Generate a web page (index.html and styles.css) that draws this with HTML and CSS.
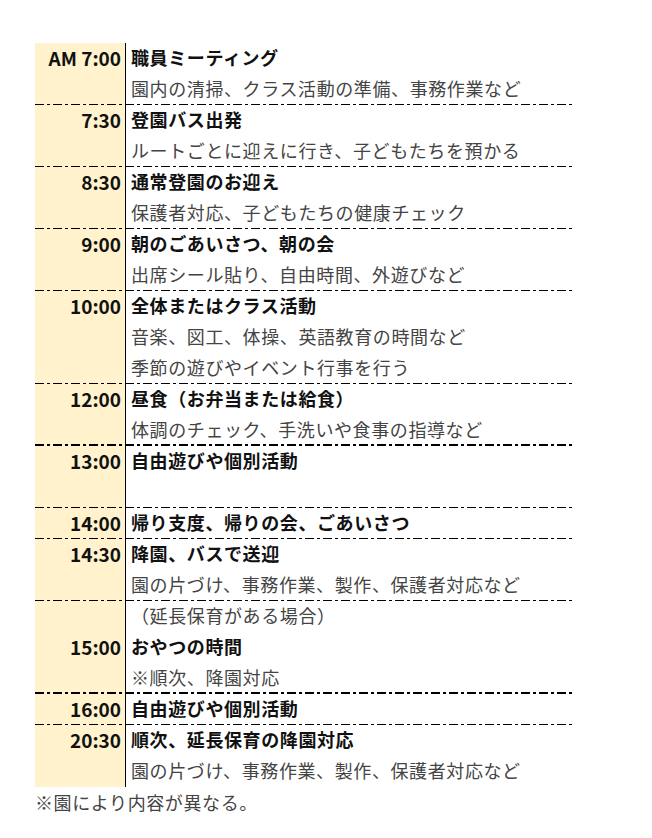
FILE: index.html
```html
<!DOCTYPE html>
<html lang="ja">
<head>
<meta charset="utf-8">
<title>園の一日</title>
<link rel="stylesheet" href="styles.css">
</head>
<body>
<div class="page">
  <div class="schedule">
    <div class="row">
      <div class="time">AM 7:00</div><div class="text main">職員ミーティング</div>
      <div class="time"></div><div class="text sub">園内の清掃、クラス活動の準備、事務作業など</div>
    </div>
    <div class="row">
      <div class="time">7:30</div><div class="text main">登園バス出発</div>
      <div class="time"></div><div class="text sub">ルートごとに迎えに行き、子どもたちを預かる</div>
    </div>
    <div class="row">
      <div class="time">8:30</div><div class="text main">通常登園のお迎え</div>
      <div class="time"></div><div class="text sub">保護者対応、子どもたちの健康チェック</div>
    </div>
    <div class="row">
      <div class="time">9:00</div><div class="text main">朝のごあいさつ、朝の会</div>
      <div class="time"></div><div class="text sub">出席シール貼り、自由時間、外遊びなど</div>
    </div>
    <div class="row">
      <div class="time">10:00</div><div class="text main">全体またはクラス活動</div>
      <div class="time"></div><div class="text sub">音楽、図工、体操、英語教育の時間など</div>
      <div class="time"></div><div class="text sub">季節の遊びやイベント行事を行う</div>
    </div>
    <div class="row thick">
      <div class="time">12:00</div><div class="text main">昼食（お弁当または給食）</div>
      <div class="time"></div><div class="text sub">体調のチェック、手洗いや食事の指導など</div>
    </div>
    <div class="row">
      <div class="time">13:00</div><div class="text main">自由遊びや個別活動</div>
      <div class="time"></div><div class="text sub"></div>
    </div>
    <div class="row">
      <div class="time">14:00</div><div class="text main">帰り支度、帰りの会、ごあいさつ</div>
    </div>
    <div class="row">
      <div class="time">14:30</div><div class="text main">降園、バスで送迎</div>
      <div class="time"></div><div class="text sub">園の片づけ、事務作業、製作、保護者対応など</div>
    </div>
    <div class="row thick">
      <div class="time"></div><div class="text sub">（延長保育がある場合）</div>
      <div class="time">15:00</div><div class="text main">おやつの時間</div>
      <div class="time"></div><div class="text sub">※順次、降園対応</div>
    </div>
    <div class="row">
      <div class="time">16:00</div><div class="text main">自由遊びや個別活動</div>
    </div>
    <div class="row last">
      <div class="time">20:30</div><div class="text main">順次、延長保育の降園対応</div>
      <div class="time"></div><div class="text sub">園の片づけ、事務作業、製作、保護者対応など</div>
    </div>
  </div>
  <p class="note">※園により内容が異なる。</p>
</div>
</body>
</html>
```

FILE: styles.css
```css
html, body {
  margin: 0;
  padding: 0;
  background: #ffffff;
}

body {
  font-family: "Noto Sans CJK JP", "Noto Sans", sans-serif;
  font-size: 18px;
  color: #111111;
}

.page {
  padding: 43px 0 0 35px;
  width: 540px;
}

.schedule {
  display: flex;
  flex-direction: column;
}

.row {
  display: grid;
  grid-template-columns: 90px 1fr;
  grid-auto-rows: 31px;
  background:
    repeating-linear-gradient(90deg, #000 0 9px, transparent 9px 12px, #000 12px 15px, transparent 15px 18px) left bottom / 100% 1px no-repeat,
    linear-gradient(90deg, #fff2cc 90px, transparent 90px);
}

.row.thick {
  background:
    repeating-linear-gradient(90deg, #000 0 9px, transparent 9px 12px, #000 12px 15px, transparent 15px 18px) left bottom / 100% 2px no-repeat,
    linear-gradient(90deg, #fff2cc 90px, transparent 90px);
}

.row.last {
  background: linear-gradient(90deg, #fff2cc 90px, transparent 90px);
}

.time {
  font-size: 19px;
  font-weight: 700;
  text-align: right;
  padding-right: 4px;
  line-height: 29px;
  color: #111111;
  white-space: nowrap;
}

.text {
  border-left: 1px solid #000;
  padding-left: 5px;
  line-height: 29px;
  white-space: nowrap;
  letter-spacing: 0.6px;
}

.main {
  font-weight: 700;
  color: #111111;
}

.sub {
  font-weight: 400;
  color: #444444;
}

.note {
  margin: 0;
  line-height: 31px;
  color: #444444;
  letter-spacing: 0.6px;
}
```
